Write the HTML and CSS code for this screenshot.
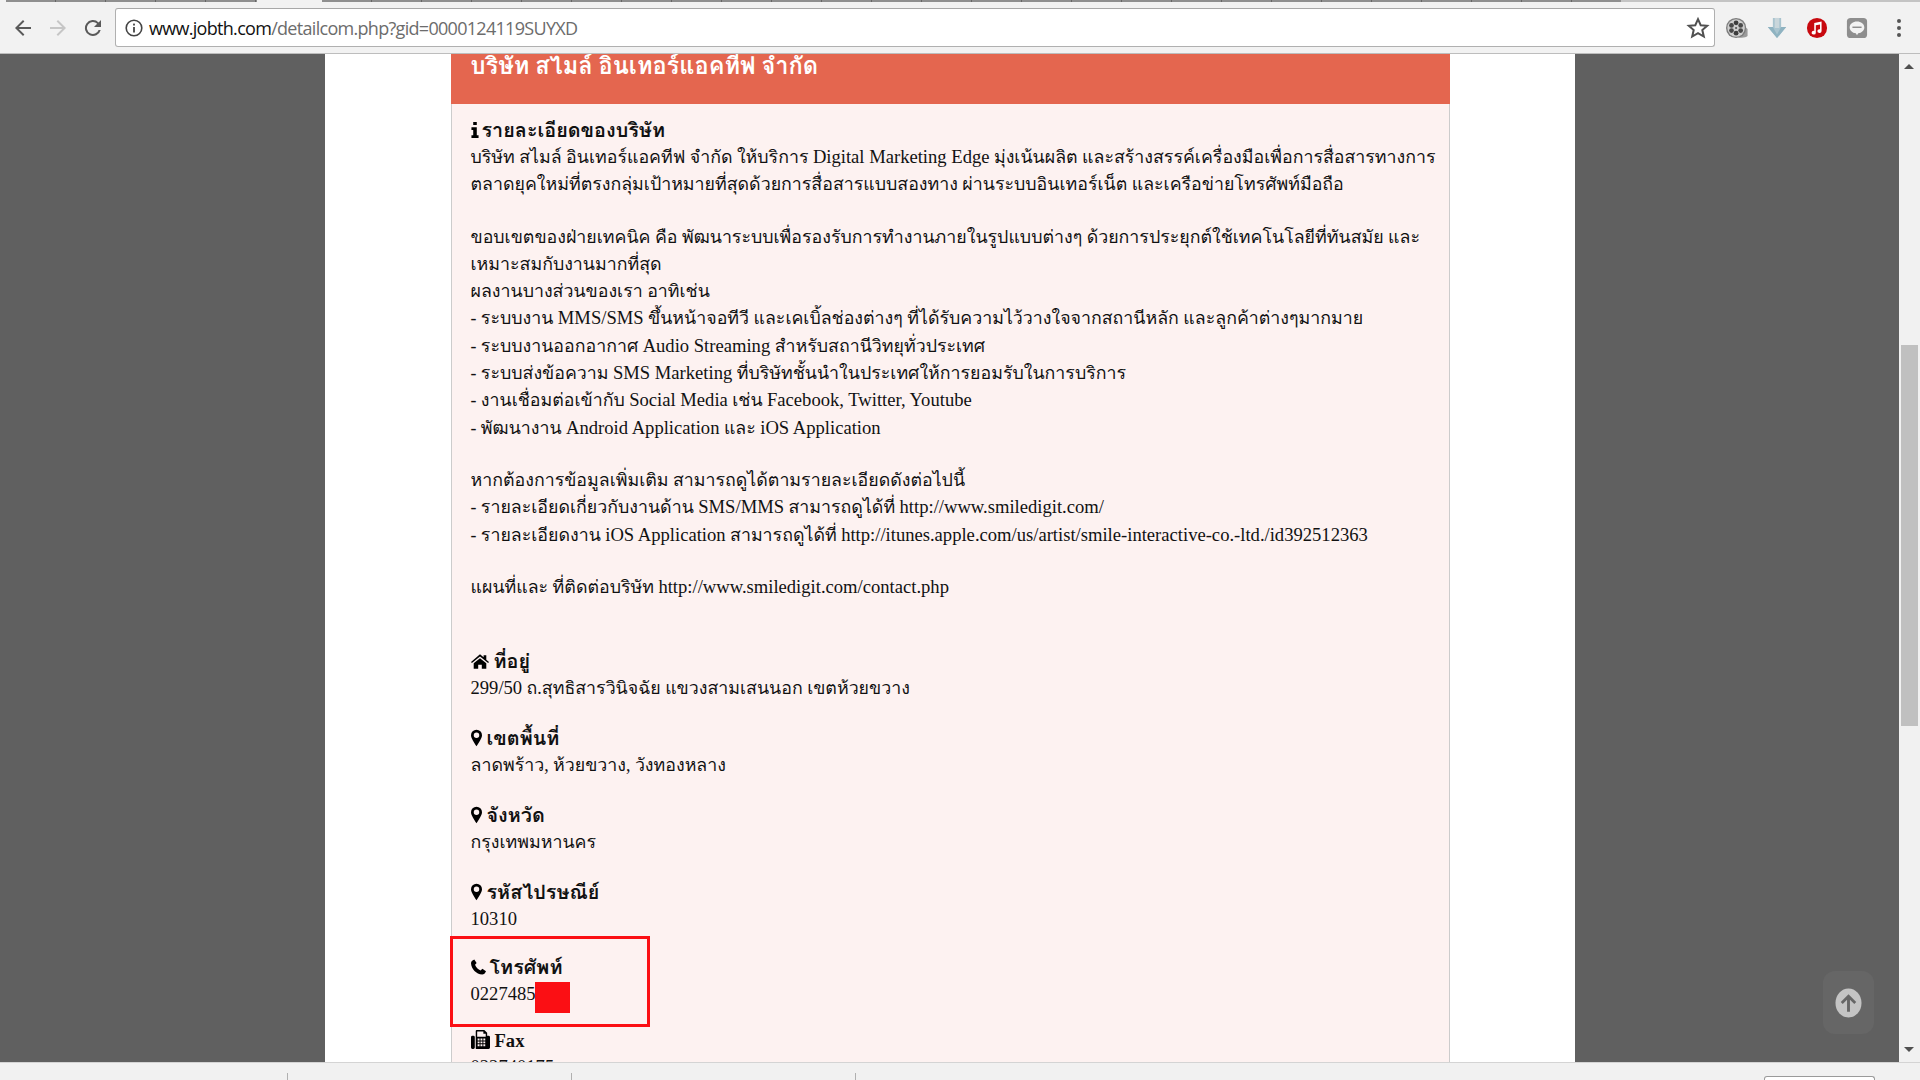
FILE: index.html
```html
<!DOCTYPE html>
<html lang="th">
<head>
  <meta charset="UTF-8">
  <title>www.jobth.com/detailcom.php?gid=0000124119SUYXD</title>
  <link rel="stylesheet" href="styles.css">
</head>
<body>
  <header class="toolbar">
    <div class="tabstrip">
      <div class="tabs tabs-first"></div>
      <div class="tabs tabs-second"></div>
      <div class="tabs-rest"></div>
    </div>
    <div class="nav">
      <svg class="nav-btn" viewBox="0 0 24 24"><path d="M20 11H7.8l5.6-5.6L12 4l-8 8 8 8 1.4-1.4L7.8 13H20z" fill="#5a5a5a"/></svg>
      <svg class="nav-btn" viewBox="0 0 24 24"><path d="M4 11h12.2l-5.6-5.6L12 4l8 8-8 8-1.4-1.4 5.6-5.600H4z" fill="#c6c6c6"/></svg>
      <svg class="nav-btn" viewBox="0 0 24 24"><path d="M17.6 6.4A8 8 0 1 0 19.7 14h-2.1a6 6 0 1 1-1.4-6.2L13 11h7V4z" fill="#5a5a5a"/></svg>
      <div class="omnibox">
        <svg class="site-info" viewBox="0 0 20 20"><circle cx="10" cy="10" r="7.8" fill="none" stroke="#444" stroke-width="1.6"/><rect x="9.1" y="9" width="1.8" height="5.5" fill="#444"/><rect x="9.1" y="5.6" width="1.8" height="1.9" fill="#444"/></svg>
        <div class="url"><span class="url-host">www.jobth.com</span>/detailcom.php?gid=0000124119SUYXD</div>
        <svg class="star" viewBox="0 0 24 24"><path d="M12 3.2l2.7 6 6.5.6-4.9 4.300 1.500 6.400-5.800-3.400-5.800 3.400 1.500-6.400-4.900-4.300 6.500-.6z" fill="none" stroke="#505050" stroke-width="2"/></svg>
      </div>
      <div class="extensions">
        <svg class="ext" viewBox="0 0 24 24">
          <path d="M13 22c4 1.200 8.500.6 10.500-1.200V13l-3.500-3z" fill="#9a9a9a"/>
          <circle cx="11" cy="12" r="11" fill="#7d7d7d"/>
          <circle cx="11" cy="12" r="9.500" fill="#cfcfcf"/>
          <circle cx="11" cy="6.300" r="2.600" fill="#3d3d3d"/><circle cx="11" cy="17.700" r="2.600" fill="#3d3d3d"/>
          <circle cx="6" cy="9.200" r="2.600" fill="#4a4a4a"/><circle cx="16" cy="9.200" r="2.600" fill="#4a4a4a"/>
          <circle cx="6" cy="14.800" r="2.600" fill="#4a4a4a"/><circle cx="16" cy="14.800" r="2.600" fill="#4a4a4a"/>
          <circle cx="11" cy="12" r="1.200" fill="#555"/>
        </svg>
        <svg class="ext" viewBox="0 0 24 24"><path d="M7.500 1h9v10h5.500L12 23 2 11h5.500z" fill="#a9c4cf"/><path d="M9.500 1h5v11h-5z" fill="#c9d6db"/><path d="M2 11h5.500l4.500 8 4.500-8H22L12 23z" fill="#8fb3c1"/></svg>
        <svg class="ext" viewBox="0 0 24 24"><circle cx="12" cy="12" r="11" fill="#c8090f"/><path d="M9 6.500l8-1.500v10.300a2.300 2 0 1 1-1.700-1.900V8.200l-4.600.9v8a2.300 2 0 1 1-1.700-1.900z" fill="#fff"/></svg>
        <svg class="ext" viewBox="0 0 24 24"><rect x="1" y="1" width="22" height="22" rx="4" fill="#8e8e8e"/><path d="M12 5c-4.400 0-8 2.800-8 6.400 0 3.200 2.900 5.900 6.700 6.300l1.300 2.300 1.300-2.300c3.800-.4 6.700-3.100 6.700-6.300C20 7.800 16.400 5 12 5z" fill="#f3f3f3"/><rect x="7" y="10.400" width="10" height="1.600" fill="#8e8e8e"/></svg>
      </div>
      <div class="menu-dots"><i></i><i></i><i></i></div>
    </div>
  </header>

  <div class="viewport">
    <main class="stage">
      <div class="page">
        <section class="panel">
          <h2 class="panel-title">บริษัท สไมล์ อินเทอร์แอคทีฟ จำกัด</h2>
          <div class="panel-body">
            <h3 class="label">
              <svg class="icon icon-info" viewBox="0 0 8 18"><path d="M2 0h4v3.500H2zM0 6h6v9h2v3H0v-3h2V9H0z"/></svg>รายละเอียดของบริษัท
            </h3>
            <div class="desc">
              <div>บริษัท สไมล์ อินเทอร์แอคทีฟ จำกัด ให้บริการ <span class="lat">Digital Marketing Edge</span> มุ่งเน้นผลิต และสร้างสรรค์เครื่องมือเพื่อการสื่อสารทางการ</div>
              <div>ตลาดยุคใหม่ที่ตรงกลุ่มเป้าหมายที่สุดด้วยการสื่อสารแบบสองทาง ผ่านระบบอินเทอร์เน็ต และเครือข่ายโทรศัพท์มือถือ</div>
            </div>
            <div class="desc">
              <div>ขอบเขตของฝ่ายเทคนิค คือ พัฒนาระบบเพื่อรองรับการทำงานภายในรูปแบบต่างๆ ด้วยการประยุกต์ใช้เทคโนโลยีที่ทันสมัย และ</div>
              <div>เหมาะสมกับงานมากที่สุด</div>
              <div>ผลงานบางส่วนของเรา อาทิเช่น</div>
              <div>- ระบบงาน <span class="lat">MMS/SMS</span> ขึ้นหน้าจอทีวี และเคเบิ้ลช่องต่างๆ ที่ได้รับความไว้วางใจจากสถานีหลัก และลูกค้าต่างๆมากมาย</div>
              <div>- ระบบงานออกอากาศ <span class="lat">Audio Streaming</span> สำหรับสถานีวิทยุทั่วประเทศ</div>
              <div>- ระบบส่งข้อความ <span class="lat">SMS Marketing</span> ที่บริษัทชั้นนำในประเทศให้การยอมรับในการบริการ</div>
              <div>- งานเชื่อมต่อเข้ากับ <span class="lat">Social Media</span> เช่น <span class="lat">Facebook, Twitter, Youtube</span></div>
              <div>- พัฒนางาน <span class="lat">Android Application</span> และ <span class="lat">iOS Application</span></div>
            </div>
            <div class="desc">
              <div>หากต้องการข้อมูลเพิ่มเติม สามารถดูได้ตามรายละเอียดดังต่อไปนี้</div>
              <div>- รายละเอียดเกี่ยวกับงานด้าน <span class="lat">SMS/MMS</span> สามารถดูได้ที่ <span class="lat">http://www.smiledigit.com/</span></div>
              <div>- รายละเอียดงาน <span class="lat">iOS Application</span> สามารถดูได้ที่ <span class="lat">http://itunes.apple.com/us/artist/smile-interactive-co.-ltd./id392512363</span></div>
            </div>
            <div class="desc">
              <div>แผนที่และ ที่ติดต่อบริษัท <span class="lat">http://www.smiledigit.com/contact.php</span></div>
            </div>

            <div class="info first">
              <h3 class="label">
                <svg class="icon icon-home" viewBox="0 0 20 16"><path d="M10 0l4 3.400V1h3v5l3 2.600-1 1.200L10 2.400 1 9.800 0 8.600zM3 10l7-5.700 7 5.700v6h-5v-4.500H8V16H3z"/></svg>ที่อยู่
              </h3>
              <div><span class="lat">299/50</span> ถ.สุทธิสารวินิจฉัย แขวงสามเสนนอก เขตห้วยขวาง</div>
            </div>
            <div class="info">
              <h3 class="label">
                <svg class="icon icon-pin" viewBox="0 0 12 18"><path fill-rule="evenodd" d="M6 0a6 6 0 0 1 6 6c0 3-3.500 8.500-6 12C3.500 14.500 0 9 0 6a6 6 0 0 1 6-6zm0 3a3 3 0 1 0 0 6 3 3 0 0 0 0-6z"/></svg>เขตพื้นที่
              </h3>
              <div>ลาดพร้าว, ห้วยขวาง, วังทองหลาง</div>
            </div>
            <div class="info">
              <h3 class="label">
                <svg class="icon icon-pin" viewBox="0 0 12 18"><path fill-rule="evenodd" d="M6 0a6 6 0 0 1 6 6c0 3-3.500 8.500-6 12C3.500 14.500 0 9 0 6a6 6 0 0 1 6-6zm0 3a3 3 0 1 0 0 6 3 3 0 0 0 0-6z"/></svg>จังหวัด
              </h3>
              <div>กรุงเทพมหานคร</div>
            </div>
            <div class="info">
              <h3 class="label">
                <svg class="icon icon-pin" viewBox="0 0 12 18"><path fill-rule="evenodd" d="M6 0a6 6 0 0 1 6 6c0 3-3.500 8.500-6 12C3.500 14.500 0 9 0 6a6 6 0 0 1 6-6zm0 3a3 3 0 1 0 0 6 3 3 0 0 0 0-6z"/></svg>รหัสไปรษณีย์
              </h3>
              <div class="num lat">10310</div>
            </div>
            <div class="info">
              <h3 class="label">
                <svg class="icon icon-phone" viewBox="0 0 16 16"><path d="M3.500 0L6 3.800 4.300 5.600c.9 2.600 3.300 5 6 6l1.800-1.700L16 12.500C15.300 14.600 13.600 16 12 16 5.500 15.500.5 10.500 0 4 0 2.400 1.400.7 3.500 0z"/></svg>โทรศัพท์
              </h3>
              <div class="num lat">0227485</div>
            </div>
            <div class="info info-fax">
              <h3 class="label">
                <svg class="icon icon-fax" viewBox="0 0 20 20"><path fill-rule="evenodd" d="M0 7.500A1.500 1.500 0 0 1 1.500 6h1A1.500 1.500 0 0 1 4 7.500v11A1.500 1.500 0 0 1 2.500 20h-1A1.500 1.500 0 0 1 0 18.500zM5 6V1a1 1 0 0 1 1-1h8l3 3v3h1.500A1.500 1.500 0 0 1 20 7.500v11a1.500 1.500 0 0 1-1.500 1.500h-13A.5.5 0 0 1 5 19.500zm1.500-4.500V7h9V4H13V1.500zM7 9v2h2V9zm3 0v2h2V9zm3 0v2h2V9zm-6 3v2h2v-2zm3 0v2h2v-2zm3 0v2h2v-2zm-6 3v2h2v-2zm3 0v2h2v-2zm3 0v2h2v-2z"/></svg><span class="lat">Fax</span>
              </h3>
              <div class="num lat">022740175</div>
            </div>
          </div>
        </section>
      </div>
    </main>
    <aside class="scrollbar">
      <span class="arrow arrow-up"></span>
      <span class="thumb"></span>
      <span class="arrow arrow-down"></span>
    </aside>

    <div class="to-top">
      <svg viewBox="0 0 28 30"><ellipse cx="14" cy="15" rx="13.500" ry="15" fill="#c4c4c4"/><path d="M14 6l8 8-2 2-4.500-4.500V24h-3V11.500L8 16l-2-2z" fill="#666"/></svg>
    </div>
    <div class="mark-box"></div>
    <div class="mark-fill"></div>
  </div>

  <footer class="downloads">
    <div class="slot"></div>
    <div class="slot"></div>
    <div class="slot"></div>
    <div class="show-all"></div>
  </footer>
</body>
</html>
```

FILE: styles.css
```css
* {
  box-sizing: border-box;
}

html, body {
  height: 100%;
}

body {
  margin: 0;
  display: flex;
  flex-direction: column;
  overflow: hidden;
  background: #f2f2f2;
  color: #111;
  font-family: "Liberation Serif", "Tahoma", "Loma", "Waree", "Garuda", "Noto Sans Thai Looped", "Noto Sans Thai", "DejaVu Sans", serif;
  font-size: 17.8px;
}

/* browser chrome */
.toolbar {
  height: 54px;
  flex: none;
  background: #f2f2f2;
  border-bottom: 1px solid #bdbdbd;
}

.tabstrip {
  height: 2px;
  display: flex;
}

.tabs {
  height: 2px;
  background: repeating-linear-gradient(90deg, #8f8f8f 0 49px, #666 49px 50px);
}

.tabs-first {
  width: 251px;
  margin-left: 6px;
}

.tabs-second {
  width: 1299px;
  margin-left: 65px;
}

.tabs-rest {
  flex: 1;
  background: #c4c4c4;
}

.nav {
  height: 51px;
  display: flex;
  align-items: center;
  padding-left: 11px;
}

.nav-btn {
  width: 24px;
  height: 24px;
  margin-right: 11px;
  flex: none;
}

.nav-btn:nth-child(3) {
  margin-right: 10px;
}

.omnibox {
  width: 1600px;
  height: 39px;
  flex: none;
  display: flex;
  align-items: center;
  padding: 0 4px 0 8px;
  background: #fff;
  border: 1px solid #b0b0b0;
  border-top-color: #a8a8a8;
  border-radius: 3px;
}

.site-info {
  width: 20px;
  height: 20px;
  flex: none;
}

.url {
  flex: 1;
  margin-left: 5px;
  font-family: "Open Sans", sans-serif;
  font-size: 18px;
  letter-spacing: -0.7px;
  color: #6c6c6c;
  white-space: nowrap;
}

.url-host {
  color: #111;
}

.star {
  width: 24px;
  height: 24px;
  flex: none;
}

.extensions {
  display: flex;
  gap: 18px;
  margin-left: 11px;
}

.ext {
  width: 22px;
  height: 24px;
  flex: none;
}

.menu-dots {
  margin-left: 29px;
  display: flex;
  flex-direction: column;
  gap: 3px;
}

.menu-dots i {
  width: 4px;
  height: 4px;
  border-radius: 50%;
  background: #555;
}

/* page area */
.viewport {
  flex: 1;
  min-height: 0;
  display: flex;
}

.stage {
  flex: 1;
  display: flex;
  justify-content: center;
  overflow: hidden;
  background: #606060;
}

.page {
  width: 1250px;
  padding-left: 126px;
  overflow: hidden;
  background: #fff;
}

.panel {
  width: 999px;
  background: #fdf2f1;
  border-left: 1px solid #ccc;
  border-right: 1px solid #ccc;
}

.panel-title {
  height: 51px;
  margin: -1px -1px 0;
  padding: 0 20px;
  background: #e4664f;
  color: #fff;
  font-size: 23.6px;
  line-height: 26px;
}

.panel-body {
  padding: 13px 19px 0;
  white-space: nowrap;
}

.panel-body h3 {
  margin: 0;
  font-size: 19.8px;
  line-height: 27px;
}

.lat {
  font-size: 18.6px;
  line-height: 1;
}

.icon {
  margin-right: 3px;
  vertical-align: -2px;
}

.icon-info {
  width: 8px;
  height: 16px;
  margin-right: 3px;
  vertical-align: -1px;
}

.icon-home {
  width: 18px;
  height: 15px;
  margin-right: 5px;
  vertical-align: -1px;
}

.icon-pin {
  width: 11px;
  height: 18px;
  margin-right: 5px;
}

.icon-phone {
  width: 15px;
  height: 16px;
  margin-right: 4px;
  vertical-align: -1px;
}

.icon-fax {
  width: 19px;
  height: 21px;
  margin-right: 5px;
  vertical-align: -3px;
}

.desc {
  line-height: 27.3px;
}

.desc + .desc {
  margin-top: 25px;
}

.info {
  margin-top: 23px;
  line-height: 27px;
}

.info.first {
  margin-top: 47px;
}

.info-fax {
  margin-top: 21px;
}

.info .num {
  line-height: 25px;
}

/* scrollbar */
.scrollbar {
  width: 21px;
  flex: none;
  position: relative;
  background: #f1f1f1;
}

.thumb {
  position: absolute;
  left: 2px;
  right: 2px;
  top: 291px;
  height: 381px;
  background: #c0c0c0;
}

.arrow {
  position: absolute;
  left: 5px;
  width: 0;
  height: 0;
  border-left: 5px solid transparent;
  border-right: 5px solid transparent;
}

.arrow-up {
  top: 10px;
  border-bottom: 5px solid #505050;
}

.arrow-down {
  bottom: 10px;
  border-top: 5px solid #505050;
}

/* floating things over the page */
.to-top {
  position: absolute;
  left: 1823px;
  top: 971px;
  width: 51px;
  height: 63px;
  display: flex;
  align-items: center;
  justify-content: center;
  background: #666;
  border-radius: 12px;
}

.to-top svg {
  width: 27px;
  height: 30px;
}

.mark-box {
  position: absolute;
  left: 450px;
  top: 936px;
  width: 200px;
  height: 91px;
  border: 3px solid #fb0f14;
}

.mark-fill {
  position: absolute;
  left: 535px;
  top: 982px;
  width: 35px;
  height: 31px;
  background: #fb0f14;
}

/* download shelf */
.downloads {
  height: 18px;
  flex: none;
  position: relative;
  display: flex;
  padding-top: 10px;
  background: #f1f1f1;
  border-top: 1px solid #d4d4d4;
}

.slot {
  width: 284px;
  border-right: 1px solid #b0b0b0;
}

.slot:first-child {
  width: 288px;
}

.show-all {
  position: absolute;
  left: 1764px;
  top: 13px;
  width: 111px;
  height: 6px;
  background: #fff;
  border: 1px solid #9a9a9a;
  border-bottom: 0;
  border-radius: 3px 3px 0 0;
}
```
